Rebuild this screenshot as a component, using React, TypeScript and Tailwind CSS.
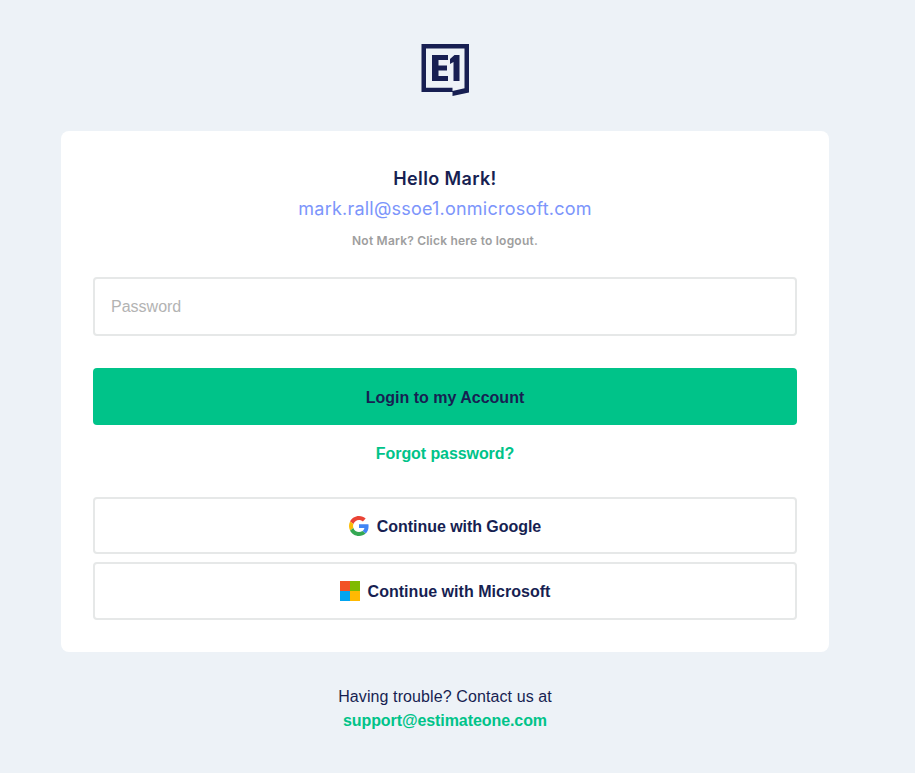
const Logo = () => (
  <svg width="48" height="52" viewBox="0 0 48 52" className="block">
    <path
      fill="#171f52"
      fillRule="evenodd"
      d="M0.5 0H48V48.5L31.5 52V48H0.5ZM5 4.5V43.8H31.5V47L43.5 44.2V4.5Z"
    />
    <path fill="#171f52" d="M11 11H27V16H17.5V21.5H26V26.5H17.5V32H27V37H11Z" />
    <path fill="#171f52" d="M29 15L33.5 11H38.5V37H32.5V18L29 20Z" />
  </svg>
);

const GoogleIcon = () => (
  <svg width="20" height="20" viewBox="0 0 48 48">
    <path fill="#EA4335" d="M24 9.5c3.54 0 6.71 1.22 9.21 3.6l6.85-6.85C35.9 2.38 30.47 0 24 0 14.62 0 6.51 5.38 2.56 13.22l7.98 6.19C12.43 13.72 17.74 9.5 24 9.5z" />
    <path fill="#4285F4" d="M46.98 24.55c0-1.57-.15-3.09-.38-4.55H24v9.02h12.94c-.58 2.96-2.26 5.48-4.78 7.18l7.73 6c4.51-4.18 7.09-10.36 7.09-17.65z" />
    <path fill="#FBBC05" d="M10.53 28.59c-.48-1.45-.76-2.99-.76-4.59s.27-3.14.76-4.59l-7.98-6.19C.92 16.46 0 20.12 0 24c0 3.88.92 7.54 2.56 10.78l7.97-6.19z" />
    <path fill="#34A853" d="M24 48c6.48 0 11.93-2.13 15.89-5.81l-7.73-6c-2.15 1.45-4.92 2.3-8.16 2.3-6.26 0-11.57-4.22-13.47-9.91l-7.98 6.19C6.51 42.62 14.62 48 24 48z" />
  </svg>
);

const MicrosoftIcon = () => (
  <svg width="20" height="20" viewBox="0 0 20 20">
    <rect x="0" y="0" width="10" height="10" fill="#F25325" />
    <rect x="10" y="0" width="10" height="10" fill="#80BA01" />
    <rect x="0" y="10" width="10" height="10" fill="#02A4EF" />
    <rect x="10" y="10" width="10" height="10" fill="#FFB902" />
  </svg>
);

const SocialButton = ({ icon, label, className }: { icon: React.ReactNode; label: string; className: string }) => (
  <button className={`flex w-full items-center justify-center gap-2 rounded border-2 border-[#e6e8e8] bg-white text-base font-bold text-[#171f52] ${className}`}>
    {icon}
    <span className="pt-px">{label}</span>
  </button>
);

export default function App() {
  return (
    <div className="min-h-[773px] bg-[#edf2f7] font-['Liberation_Sans',Arial,sans-serif]">
      <div className="flex w-[890px] flex-col items-center pt-11">
        <Logo />

        <div className="mt-[35px] w-[768px] rounded-lg bg-white px-8 pt-[36px] pb-8">
          <div className="flex flex-col items-center font-['Inter',sans-serif]">
            <h1 className="text-lg leading-[24px] font-semibold tracking-[0.36px] text-[#171f52]">Hello Mark!</h1>
            <p className="mt-[6px] text-lg leading-[24px] tracking-[0.22px] text-[#7c95fb]">mark.rall@ssoe1.onmicrosoft.com</p>
            <p className="mt-[12px] text-xs leading-[16px] font-semibold tracking-[0.22px] text-[#9e9e9e]">Not Mark? Click here to logout.</p>
          </div>

          <input
            placeholder="Password"
            className="mt-[28px] block h-[59px] w-full rounded border-2 border-[#e6e8e8] bg-white px-4 text-base text-[#171f52] outline-none placeholder:text-[#b3b3b3]"
          />

          <button className="mt-[32px] block h-[57px] w-full rounded bg-[#00c389] pt-[2px] text-base font-bold text-[#171f52]">
            Login to my Account
          </button>

          <div className="mt-[19px] text-center text-base leading-[20px] font-bold tracking-[-0.08px] text-[#00c389]">Forgot password?</div>

          <div className="mt-[33px] flex flex-col gap-2">
            <SocialButton className="h-[57px] pt-px tracking-[-0.05px]" icon={<GoogleIcon />} label="Continue with Google" />
            <SocialButton className="h-[58px] tracking-[0.03px]" icon={<MicrosoftIcon />} label="Continue with Microsoft" />
          </div>
        </div>

        <div className="mt-[33px] text-center text-base leading-[24px] text-[#171f52]">
          <div className="tracking-[0.1px]">Having trouble? Contact us at</div>
          <div className="font-bold tracking-[-0.08px] text-[#00c389]">support@estimateone.com</div>
        </div>
      </div>
    </div>
  );
}
